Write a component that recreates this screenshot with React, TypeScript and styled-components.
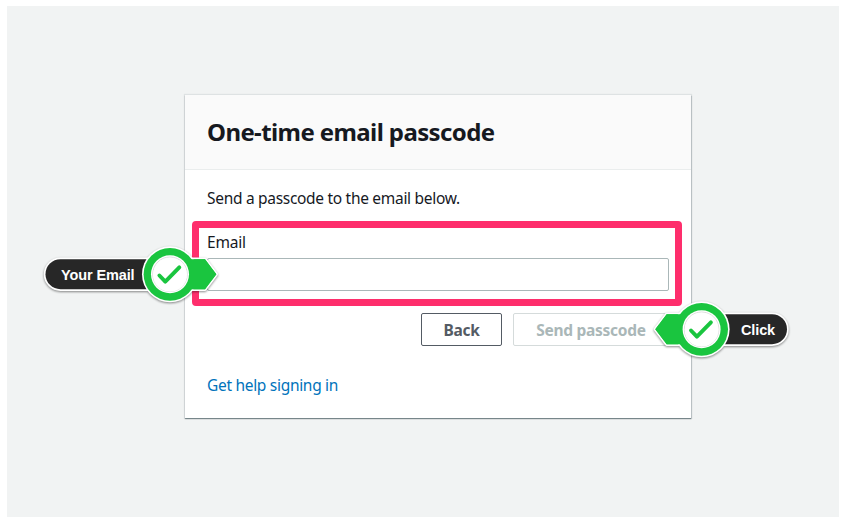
import React from "react";
import styled, { createGlobalStyle } from "styled-components";

const GlobalStyle = createGlobalStyle`
  * { box-sizing: border-box; }
  body { margin: 0; background: #fff; overflow: hidden; }
`;

const Page = styled.div`
  position: relative;
  width: 848px;
  height: 517px;
  padding: 6px 9px 0 7px;
  font-family: "Noto Sans", "Open Sans", sans-serif;
  color: #16191f;
`;

const Backdrop = styled.main`
  height: 511px;
  padding: 89px 0 0 178px;
  background: #f1f3f3;
`;

const Card = styled.section`
  width: 506px;
  height: 323px;
  background: #fff;
  box-shadow: 0 1px 1px rgba(0, 28, 36, 0.4), 0 0 1px 1px rgba(0, 28, 36, 0.08), 1px 1px 1px rgba(0, 28, 36, 0.1);
`;

const CardHeader = styled.header`
  height: 75px;
  padding: 19px 22px 0;
  background: #fafafa;
  border-bottom: 1px solid #eaeded;
`;

const Title = styled.h1`
  margin: 0;
  font-size: 24px;
  line-height: 35px;
  font-weight: 700;
  letter-spacing: -0.6px;
  white-space: nowrap;
`;

const CardBody = styled.div`
  padding: 16px 22px 0;
`;

const Intro = styled.p`
  margin: 0;
  font-size: 15.5px;
  line-height: 24px;
  letter-spacing: -0.3px;
`;

const FieldHighlight = styled.div`
  width: 490px;
  height: 85px;
  margin: 11px 0 0 -15px;
  padding: 2px 6px 0 8px;
  border: 7px solid #fe2e6c;
  border-radius: 4px;
`;

const Label = styled.label`
  display: block;
  font-size: 15.5px;
  line-height: 24px;
  letter-spacing: -0.2px;
`;

const Input = styled.input`
  display: block;
  width: 462px;
  height: 33px;
  margin-top: 4px;
  padding: 4px 10px;
  border: 1px solid #aab7b8;
  border-radius: 2px;
  background: #fff;
  font: inherit;
  outline: none;
`;

const Actions = styled.div`
  display: flex;
  justify-content: flex-end;
  gap: 11px;
  margin-top: 7px;
`;

const Button = styled.button<{ $width: number }>`
  width: ${(p) => p.$width}px;
  height: 33px;
  padding: 1px 0 0;
  border: 1px solid #545b64;
  border-radius: 2px;
  background: #fff;
  color: #545b64;
  font: 700 15.5px/30px "Noto Sans", sans-serif;
  letter-spacing: -0.28px;
  white-space: nowrap;
  &:disabled {
    border-color: #d5dbdb;
    color: #aab7b8;
  }
`;

const HelpLink = styled.a`
  display: inline-block;
  margin-top: 27px;
  color: #0073bb;
  font-size: 15.5px;
  line-height: 24px;
  letter-spacing: -0.3px;
  text-decoration: none;
`;

const Callout = styled.div<{ $x: number; $y: number; $width: number }>`
  position: absolute;
  left: ${(p) => p.$x}px;
  top: ${(p) => p.$y}px;
  width: ${(p) => p.$width}px;
  height: 60px;
`;

const CalloutShape = styled.svg`
  display: block;
  filter: drop-shadow(0 1px 1.2px rgba(0, 0, 0, 0.45));
`;

const CalloutText = styled.span<{ $left: number }>`
  position: absolute;
  left: ${(p) => p.$left}px;
  top: 21px;
  color: #fff;
  font: 700 14.5px/20px "Liberation Sans", Arial, sans-serif;
  letter-spacing: -0.12px;
  white-space: nowrap;
`;

/* Check badge drawn around its own centre. */
const Badge = () => (
  <>
    <circle r="28" fill="#fff" />
    <circle r="26.4" fill="#1ac53f" />
    <circle r="19" fill="#fff" />
    <circle r="17.3" fill="none" stroke="#d5d5d5" strokeWidth="0.8" />
    <circle r="16.9" fill="#fff" cy="0.4" />
    <path d="M-10.6 1.2L-4.7 7.4L9.3-7" fill="none" stroke="#1ac53f" strokeWidth="3.9" strokeLinecap="round" strokeLinejoin="round" />
  </>
);

export default function App() {
  return (
    <Page>
      <GlobalStyle />
      <Backdrop>
        <Card>
          <CardHeader>
            <Title>One-time email passcode</Title>
          </CardHeader>
          <CardBody>
            <Intro>Send a passcode to the email below.</Intro>
            <FieldHighlight>
              <Label htmlFor="email">Email</Label>
              <Input id="email" type="email" />
            </FieldHighlight>
            <Actions>
              <Button $width={81}>Back</Button>
              <Button $width={156} disabled>Send passcode</Button>
            </Actions>
            <HelpLink>Get help signing in</HelpLink>
          </CardBody>
        </Card>
      </Backdrop>

      <Callout $x={40} $y={244} $width={184}>
        <CalloutShape width="184" height="62" viewBox="0 0 184 62">
          <path d="M20.5 15.2H130V45.2H20.5A15 15 0 0 1 20.5 15.2Z" fill="#272727" stroke="#fff" strokeWidth="3.4" paintOrder="stroke" />
          <path d="M130 15.2H165L176.3 30.2L165 45.2H130Z" fill="#1ac53f" stroke="#fff" strokeWidth="3.4" strokeLinejoin="round" paintOrder="stroke" />
          <g transform="translate(130 30.3)"><Badge /></g>
          <path d="M151 15.2H165L176.3 30.2L165 45.2H151Z" fill="#1ac53f" />
        </CalloutShape>
        <CalloutText $left={21}>Your Email</CalloutText>
      </Callout>

      <Callout $x={648} $y={299} $width={144}>
        <CalloutShape width="144" height="62" viewBox="0 0 144 62">
          <path d="M54 15.2H124A15 15 0 0 1 124 45.2H54Z" fill="#272727" stroke="#fff" strokeWidth="3.4" paintOrder="stroke" />
          <path d="M54 15.2H18.7L7.3 30.2L18.7 45.2H54Z" fill="#1ac53f" stroke="#fff" strokeWidth="3.4" strokeLinejoin="round" paintOrder="stroke" />
          <g transform="translate(53.6 30.3)"><Badge /></g>
          <path d="M32.6 15.2H18.7L7.3 30.2L18.7 45.2H32.6Z" fill="#1ac53f" />
        </CalloutShape>
        <CalloutText $left={93}>Click</CalloutText>
      </Callout>
    </Page>
  );
}
